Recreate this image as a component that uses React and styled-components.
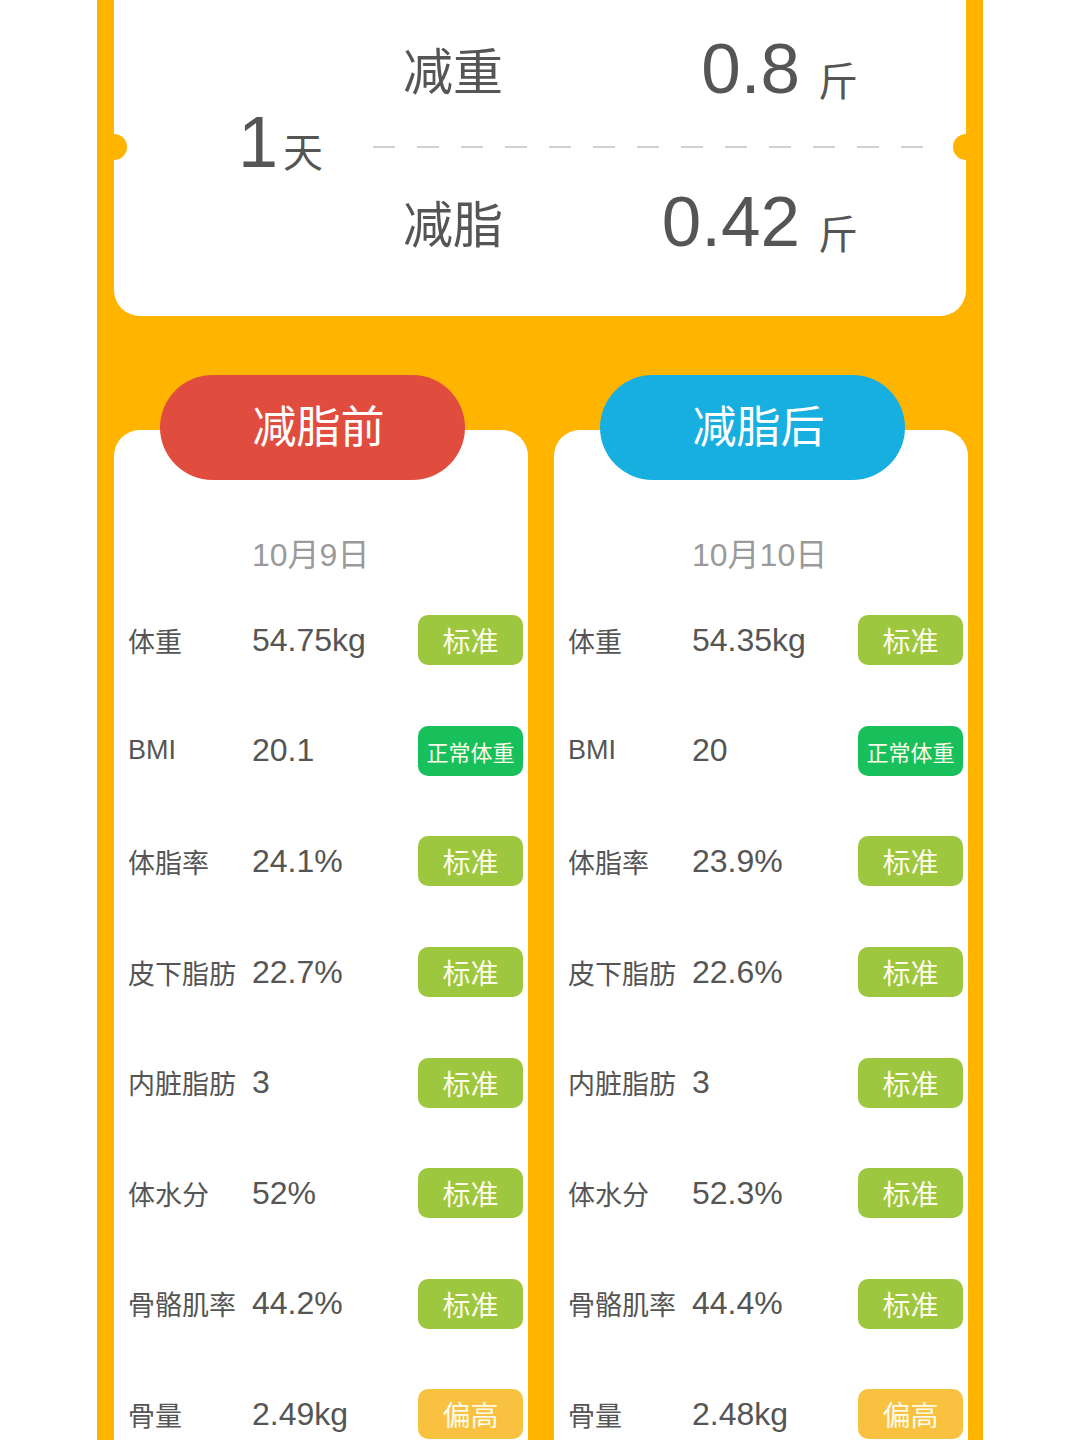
import React from 'react'
import styled, { createGlobalStyle } from 'styled-components'

const GlobalStyle = createGlobalStyle`
  body {
    margin: 0;
    background: #fff;
    font-family: "Liberation Sans", "Noto Sans CJK SC", sans-serif;
  }
`

const before = {
  title: '减脂前',
  tone: '#E04D3F',
  date: '10月9日',
  rows: [
    { label: '体重', value: '54.75kg', badge: '标准', kind: 'ok' },
    { label: 'BMI', value: '20.1', badge: '正常体重', kind: 'normal' },
    { label: '体脂率', value: '24.1%', badge: '标准', kind: 'ok' },
    { label: '皮下脂肪', value: '22.7%', badge: '标准', kind: 'ok' },
    { label: '内脏脂肪', value: '3', badge: '标准', kind: 'ok' },
    { label: '体水分', value: '52%', badge: '标准', kind: 'ok' },
    { label: '骨骼肌率', value: '44.2%', badge: '标准', kind: 'ok' },
    { label: '骨量', value: '2.49kg', badge: '偏高', kind: 'high' },
  ],
}

const after = {
  title: '减脂后',
  tone: '#17AEE0',
  date: '10月10日',
  rows: [
    { label: '体重', value: '54.35kg', badge: '标准', kind: 'ok' },
    { label: 'BMI', value: '20', badge: '正常体重', kind: 'normal' },
    { label: '体脂率', value: '23.9%', badge: '标准', kind: 'ok' },
    { label: '皮下脂肪', value: '22.6%', badge: '标准', kind: 'ok' },
    { label: '内脏脂肪', value: '3', badge: '标准', kind: 'ok' },
    { label: '体水分', value: '52.3%', badge: '标准', kind: 'ok' },
    { label: '骨骼肌率', value: '44.4%', badge: '标准', kind: 'ok' },
    { label: '骨量', value: '2.48kg', badge: '偏高', kind: 'high' },
  ],
}

const badgeColors = {
  ok: '#9DC73E',
  normal: '#17C05B',
  high: '#F9C140',
}

const App = () => {
  return (
    <>
      <GlobalStyle />
      <Panel>
        <Summary>
          <Days>
            <Big>1</Big>
            <Unit $gap="5px">天</Unit>
          </Days>
          <Results>
            <ResultRow $lift="10px">
              <ResultLabel>减重</ResultLabel>
              <ResultValue>0.8</ResultValue>
              <Unit $gap="18px">斤</Unit>
            </ResultRow>
            <Dashes />
            <ResultRow>
              <ResultLabel>减脂</ResultLabel>
              <ResultValue>0.42</ResultValue>
              <Unit $gap="18px">斤</Unit>
            </ResultRow>
          </Results>
        </Summary>
        <Columns>
          <Column {...before} />
          <Column {...after} />
        </Columns>
      </Panel>
    </>
  )
}

const Column = ({ title, tone, date, rows }) => {
  return (
    <div>
      <Pill $tone={tone}>{title}</Pill>
      <Card>
        <DateLine>{date}</DateLine>
        {rows.map((r, i) => (
          <Row key={i}>
            <Label>{r.label}</Label>
            <Value>{r.value}</Value>
            <Badge $kind={r.kind}>{r.badge}</Badge>
          </Row>
        ))}
      </Card>
    </div>
  )
}

const Panel = styled.div`
  margin: 0 97px;
  height: 1440px;
  overflow: hidden;
  background: #FFB400;
  padding: 0 15px 0 17px;
  box-sizing: border-box;
`

const Summary = styled.div`
  position: relative;
  height: 316px;
  margin-right: 2px;
  background: #fff;
  border-radius: 0 0 26px 26px;
  display: flex;
  color: #555;
  &::before, &::after {
    content: '';
    position: absolute;
    top: 134px;
    width: 26px;
    height: 26px;
    border-radius: 50%;
    background: #FFB400;
  }
  &::before { left: -13px; }
  &::after { right: -13px; }
`

const Days = styled.div`
  width: 259px;
  box-sizing: border-box;
  padding: 106px 0 0 124px;
  display: flex;
  align-items: baseline;
`

const Big = styled.span`
  font-size: 72px;
  line-height: 1;
`

const Unit = styled.span`
  font-size: 40px;
  margin-left: ${p => p.$gap};
  font-family: "Noto Sans CJK SC", sans-serif;
`

const Results = styled.div`
  flex: 1;
  padding-right: 41px;
  display: flex;
  flex-direction: column;
`

const ResultRow = styled.div`
  height: 146px;
  display: flex;
  align-items: center;
  padding: 0 0 ${p => p.$lift || '0'} 30px;
  box-sizing: border-box;
  span:last-child {
    margin-top: 22px;
  }
`

const ResultLabel = styled.span`
  font-size: 50px;
  font-family: "Noto Sans CJK SC", sans-serif;
  width: 140px;
`

const ResultValue = styled.span`
  font-size: 71px;
  width: 257px;
  text-align: right;
  line-height: 1;
`

const Dashes = styled.div`
  height: 2px;
  background: repeating-linear-gradient(to right, #cfcfcf 0 22px, transparent 22px 44px);
`

const Columns = styled.div`
  display: grid;
  grid-template-columns: 414px 414px;
  gap: 26px;
  padding-top: 59px;
`

const Pill = styled.div`
  position: relative;
  z-index: 1;
  width: 305px;
  height: 105px;
  margin: 0 0 -50px 46px;
  padding: 0 0 8px 12px;
  box-sizing: border-box;
  border-radius: 53px;
  background: ${p => p.$tone};
  color: #fff;
  font-family: "Noto Sans CJK SC", sans-serif;
  font-size: 44px;
  display: flex;
  align-items: center;
  justify-content: center;
`

const Card = styled.div`
  background: #fff;
  border-radius: 26px 26px 0 0;
  padding: 105px 5px 0 14px;
  height: 1100px;
  box-sizing: border-box;
`

const DateLine = styled.div`
  font-size: 32px;
  line-height: 40px;
  color: #9a9a9a;
  padding-left: 124px;
  margin-bottom: 10px;
`

const Row = styled.div`
  height: 110.6px;
  display: flex;
  align-items: center;
  color: #555;
`

const Label = styled.span`
  width: 124px;
  font-size: 27px;
`

const Value = styled.span`
  flex: 1;
  font-size: 32px;
`

const Badge = styled.span`
  width: 105px;
  height: 50px;
  border-radius: 10px;
  background: ${p => badgeColors[p.$kind]};
  color: #fdfbe9;
  font-size: ${p => (p.$kind === 'normal' ? '22px' : '28px')};
  display: flex;
  align-items: center;
  justify-content: center;
`

export default App
